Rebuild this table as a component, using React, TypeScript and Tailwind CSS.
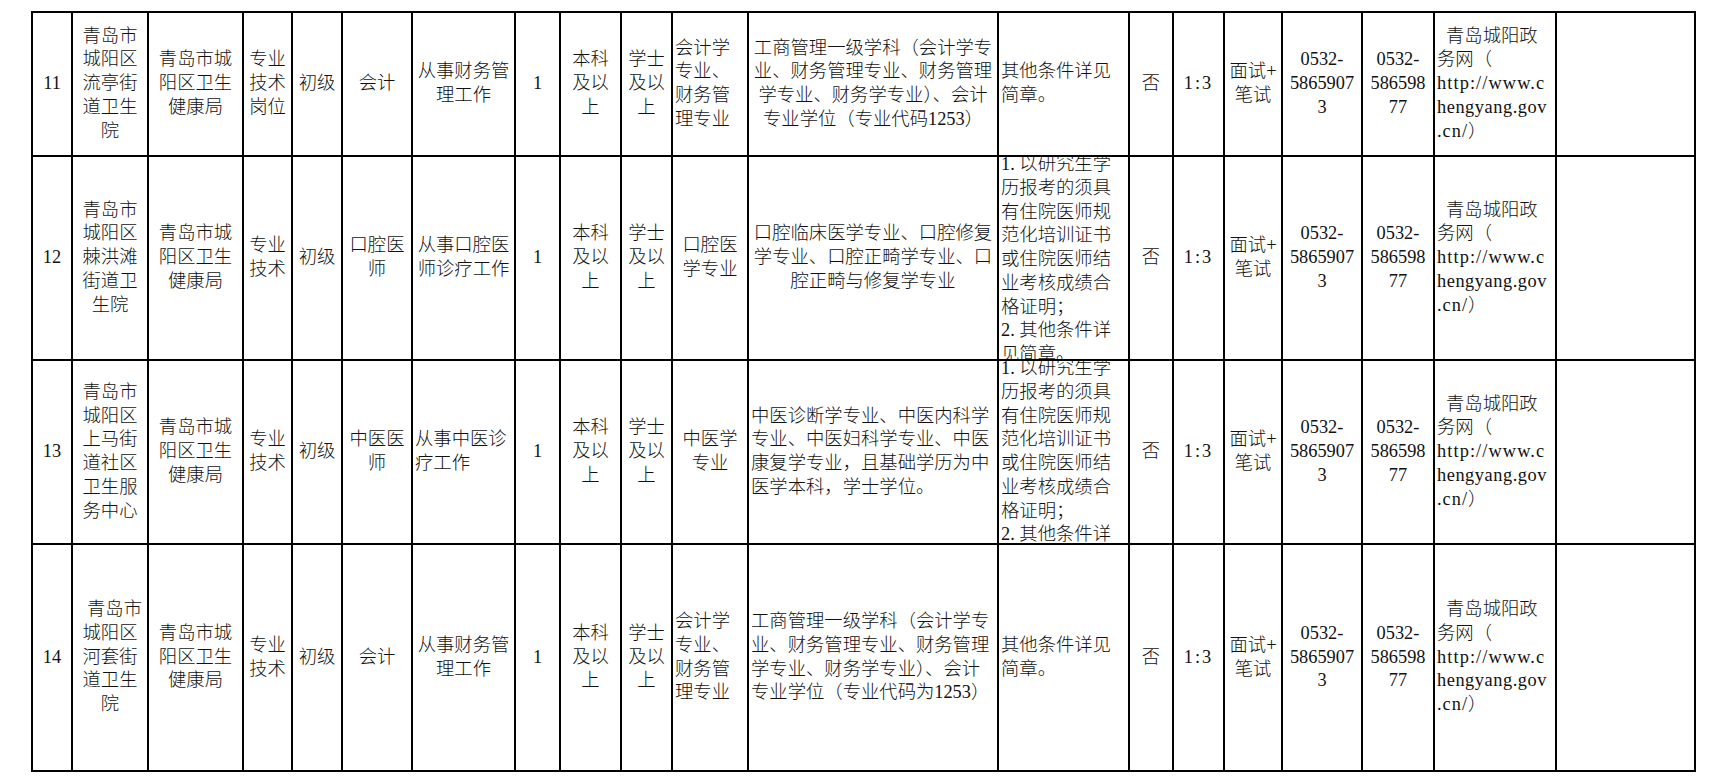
import React from "react";

type Line = string | [string, string];
type Cell = { l: Line[]; a?: "l" | "c"; top?: boolean; ind?: boolean };

const c = (l: Line[] | string, opts: Partial<Cell> = {}): Cell => ({
  l: typeof l === "string" ? [l] : l,
  ...opts,
});

const unitHealth = c(["青岛市城", "阳区卫生", "健康局"]);
const phone1 = c(["0532-", "5865907", "3"]);
const phone2 = c(["0532-", "586598", "77"]);
const site = c(
  ["青岛城阳政", "务网（", ["http://www.c", "tracking-[1.1px]"], ["hengyang.gov", "tracking-[0.55px]"], [".cn/）", "tracking-[1px]"]],
  { a: "l", ind: true }
);
const longReq = ["1. 以研究生学", "历报考的须具", "有住院医师规", "范化培训证书", "或住院医师结", "业考核成绩合", "格证明；", "2. 其他条件详", "见简章。"];
const ratio = c([["1:3", "tracking-[2px]"]]);

const rows: Cell[][] = [
  [
    c("11"),
    c(["青岛市", "城阳区", "流亭街", "道卫生", "院"]),
    unitHealth,
    c(["专业", "技术", "岗位"]),
    c("初级"),
    c("会计"),
    c(["从事财务管", "理工作"]),
    c("1"),
    c(["本科", "及以", "上"]),
    c(["学士", "及以", "上"]),
    c(["会计学", "专业、", "财务管", "理专业"], { a: "l" }),
    c(["工商管理一级学科（会计学专", "业、财务管理专业、财务管理", "学专业、财务学专业）、会计", "专业学位（专业代码1253）"]),
    c(["其他条件详见", "简章。"], { a: "l" }),
    c("否"),
    ratio,
    c(["面试+", "笔试"]),
    phone1,
    phone2,
    site,
    c([]),
  ],
  [
    c("12"),
    c(["青岛市", "城阳区", "棘洪滩", "街道卫", "生院"]),
    unitHealth,
    c(["专业", "技术"]),
    c("初级"),
    c(["口腔医", "师"]),
    c(["从事口腔医", "师诊疗工作"]),
    c("1"),
    c(["本科", "及以", "上"]),
    c(["学士", "及以", "上"]),
    c(["口腔医", "学专业"]),
    c(["口腔临床医学专业、口腔修复", "学专业、口腔正畸学专业、口", "腔正畸与修复学专业"]),
    c(longReq, { a: "l", top: true }),
    c("否"),
    ratio,
    c(["面试+", "笔试"]),
    phone1,
    phone2,
    site,
    c([]),
  ],
  [
    c("13"),
    c(["青岛市", "城阳区", "上马街", "道社区", "卫生服", "务中心"]),
    unitHealth,
    c(["专业", "技术"]),
    c("初级"),
    c(["中医医", "师"]),
    c(["从事中医诊", "疗工作"], { a: "l" }),
    c("1"),
    c(["本科", "及以", "上"]),
    c(["学士", "及以", "上"]),
    c(["中医学", "专业"]),
    c(["中医诊断学专业、中医内科学", "专业、中医妇科学专业、中医", "康复学专业，且基础学历为中", "医学本科，学士学位。"], { a: "l" }),
    c(longReq, { a: "l", top: true }),
    c("否"),
    ratio,
    c(["面试+", "笔试"]),
    phone1,
    phone2,
    site,
    c([]),
  ],
  [
    c("14"),
    c(["青岛市", "城阳区", "河套街", "道卫生", "院"], { ind: true }),
    unitHealth,
    c(["专业", "技术"]),
    c("初级"),
    c("会计"),
    c(["从事财务管", "理工作"]),
    c("1"),
    c(["本科", "及以", "上"]),
    c(["学士", "及以", "上"]),
    c(["会计学", "专业、", "财务管", "理专业"], { a: "l" }),
    c(["工商管理一级学科（会计学专", "业、财务管理专业、财务管理", "学专业、财务学专业）、会计", "专业学位（专业代码为1253）"], { a: "l" }),
    c(["其他条件详见", "简章。"], { a: "l" }),
    c("否"),
    ratio,
    c(["面试+", "笔试"]),
    phone1,
    phone2,
    site,
    c([]),
  ],
];

function CellView({ cell }: { cell: Cell }) {
  return (
    <div
      className={`bg-white overflow-hidden flex flex-col px-[2px] ${cell.top ? "justify-start" : "justify-center"} ${
        cell.a === "l" ? "text-left" : "text-center"
      }`}
    >
      <div className={cell.top ? "-mt-[4px]" : ""}>
        {cell.l.map((ln, i) => {
          const text = typeof ln === "string" ? ln : ln[0];
          const extra = typeof ln === "string" ? "" : ln[1];
          return (
            <div key={i} className={`whitespace-pre ${extra} ${cell.ind && i === 0 ? "pl-[9px]" : ""}`}>
              {text}
            </div>
          );
        })}
      </div>
    </div>
  );
}

export default function App() {
  return (
    <div className="w-[1731px] h-[782px] bg-white pt-[11px] pl-[31px] overflow-hidden">
      <div className="grid w-fit bg-black p-[2px] gap-[2px] grid-cols-[38px_74px_93px_47px_48px_68px_101px_43px_59px_49px_74px_248px_129px_42px_49px_56px_78px_70px_120px_137px] grid-rows-[142px_202px_182px_225px] font-['Liberation_Serif','Noto_Sans_CJK_SC',serif] font-light text-[18.33px] leading-[23.75px] text-[#111]">
        {rows.map((r, ri) => r.map((cell, ci) => <CellView key={`${ri}-${ci}`} cell={cell} />))}
      </div>
    </div>
  );
}
